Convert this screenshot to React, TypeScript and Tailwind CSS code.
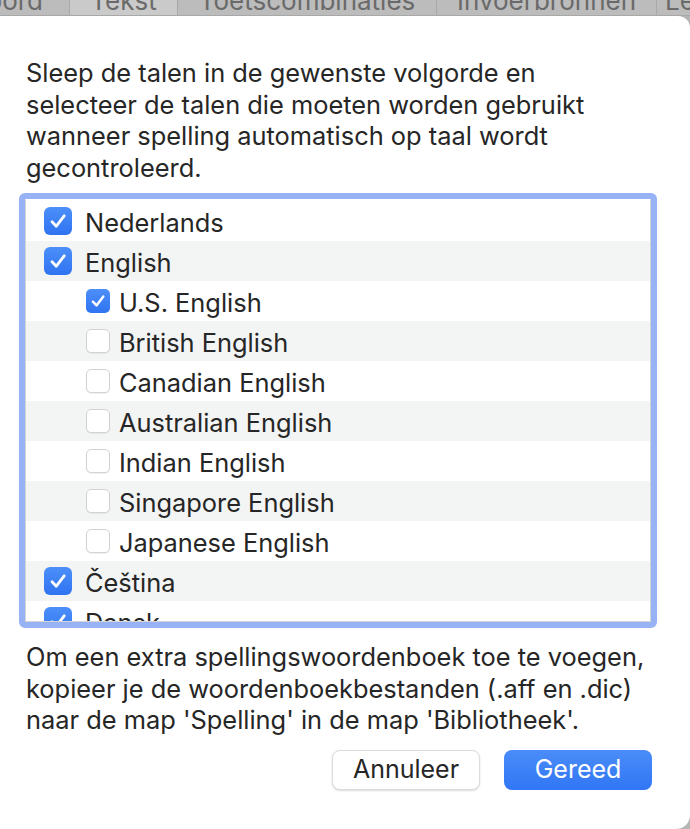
const font = { fontFamily: '"Inter", "Liberation Sans", sans-serif' };

type Lang = { name: string; checked: boolean; sub?: boolean };

const langs: Lang[] = [
  { name: "Nederlands", checked: true },
  { name: "English", checked: true },
  { name: "U.S. English", checked: true, sub: true },
  { name: "British English", checked: false, sub: true },
  { name: "Canadian English", checked: false, sub: true },
  { name: "Australian English", checked: false, sub: true },
  { name: "Indian English", checked: false, sub: true },
  { name: "Singapore English", checked: false, sub: true },
  { name: "Japanese English", checked: false, sub: true },
  { name: "Čeština", checked: true },
  { name: "Dansk", checked: true },
];

function Box({ checked, small }: { checked: boolean; small?: boolean }) {
  const size = small ? "w-[24px] h-[24px] rounded-[5px]" : "w-[28px] h-[28px] rounded-[6px]";
  if (!checked) {
    return <div className={`${size} shrink-0 bg-white border border-[#d2d2d2] shadow-[0_1px_1px_rgba(0,0,0,0.06)]`} />;
  }
  return (
    <div className={`${size} shrink-0 bg-gradient-to-b from-[#4c8ff9] to-[#2f73f1] flex items-center justify-center`}>
      <svg viewBox="0 0 28 28" className="w-full h-full">
        <path d="M8 14.8 L12.3 19.2 L20.2 8.8" fill="none" stroke="white" strokeWidth="2.8" strokeLinecap="round" strokeLinejoin="round" />
      </svg>
    </div>
  );
}

function Tab({ label, w, active, align = "center" }: { label: string; w: string; active?: boolean; align?: string }) {
  return (
    <div
      className={`${w} h-[15px] shrink-0 overflow-hidden whitespace-nowrap flex border-r border-[#a9a9a9] ${
        active ? "bg-[#cacaca]" : "bg-[#bcbcbc]"
      } ${align === "end" ? "justify-end pr-[26px]" : "justify-center"}`}
    >
      <span className="block -mt-[13px] text-[26px] leading-[28px] text-[#6a6a6a]">{label}</span>
    </div>
  );
}

export default function App() {
  return (
    <div className="w-[690px] h-[829px] bg-[#b5b5b5] flex flex-col overflow-hidden" style={font}>
      <div className="h-[16px] flex border-b border-[#a8a8a8] bg-[#bcbcbc] overflow-hidden">
        <Tab label="Toetsenbord" w="w-[70px]" align="end" />
        <Tab label="Tekst" w="w-[108px]" active />
        <Tab label="Toetscombinaties" w="w-[259px]" />
        <Tab label="Invoerbronnen" w="w-[220px]" />
        <div className="flex-1 h-[15px] overflow-hidden pl-[8px]">
          <span className="block -mt-[13px] text-[26px] leading-[28px] text-[#6a6a6a]">Lettertypen</span>
        </div>
      </div>

      <div className="flex-1 bg-white rounded-tr-[12px] rounded-br-[14px] flex flex-col pt-[41px] text-[#262626]">
        <p className="pl-[26px] text-[25.4px] leading-[31.7px] whitespace-nowrap">
          Sleep de talen in de gewenste volgorde en
          <br />
          selecteer de talen die moeten worden gebruikt
          <br />
          wanneer spelling automatisch op taal wordt
          <br />
          gecontroleerd.
        </p>

        <div className="ml-[19px] mt-[9px] w-[638px] h-[435px] border-[6px] border-[#97b3f5] rounded-[6px] shrink-0">
          <div className="w-full h-full border border-[#d4d4d4] border-t-white pt-[1px] overflow-hidden bg-white">
            {langs.map((l, i) => (
              <div
                key={l.name}
                className={`h-[40px] flex items-center ${i % 2 === 1 ? "bg-[#f3f4f4]" : "bg-white"} ${
                  l.sub ? "pl-[60px] gap-[9px]" : "pl-[18px] gap-[13px]"
                }`}
              >
                <Box checked={l.checked} small={l.sub} />
                <span className="text-[25.4px] leading-none pt-[3px]">{l.name}</span>
              </div>
            ))}
          </div>
        </div>

        <p className="pl-[26px] mt-[13px] text-[25.4px] leading-[31.7px] whitespace-nowrap">
          Om een extra spellingswoordenboek toe te voegen,
          <br />
          kopieer je de woordenboekbestanden (.aff en .dic)
          <br />
          naar de map 'Spelling' in de map 'Bibliotheek'.
        </p>

        <div className="flex justify-end gap-[24px] pr-[38px] mt-[14px]">
          <button className="w-[148px] h-[40px] rounded-[8px] bg-white border border-[#dcdcdc] shadow-[0_1px_2px_rgba(0,0,0,0.15)] text-[25px] text-[#262626]">
            Annuleer
          </button>
          <button className="w-[148px] h-[40px] rounded-[8px] bg-gradient-to-b from-[#4a8cf8] to-[#3176f5] text-[25px] text-white">
            Gereed
          </button>
        </div>
      </div>
    </div>
  );
}
